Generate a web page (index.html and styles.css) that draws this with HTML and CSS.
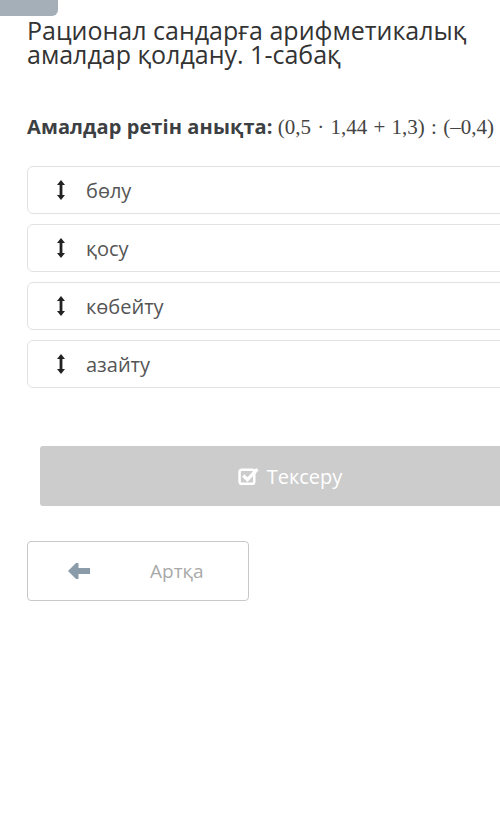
FILE: index.html
```html
<!DOCTYPE html>
<html lang="kk">
<head>
  <meta charset="UTF-8">
  <title>Рационал сандарға арифметикалық амалдар қолдану</title>
  <link rel="stylesheet" href="styles.css">
</head>
<body>

<div class="tab"></div>

<main class="lesson">
  <h1 class="title">Рационал сандарға арифметикалық амалдар қолдану. 1-сабақ</h1>

  <p class="question"><b>Амалдар ретін анықта:</b> <span class="math">(0,5 · 1,44 + 1,3) : (–0,4)</span></p>

  <ul class="order-list">
    <li class="order-item">
      <svg class="drag" viewBox="0 0 8 20" width="8" height="20"><path d="M4 0 L8 5 H5.4 V15 H8 L4 20 L0 15 H2.6 V5 H0 Z" fill="#222"/></svg>
      <span>бөлу</span>
    </li>
    <li class="order-item">
      <svg class="drag" viewBox="0 0 8 20" width="8" height="20"><path d="M4 0 L8 5 H5.4 V15 H8 L4 20 L0 15 H2.6 V5 H0 Z" fill="#222"/></svg>
      <span>қосу</span>
    </li>
    <li class="order-item">
      <svg class="drag" viewBox="0 0 8 20" width="8" height="20"><path d="M4 0 L8 5 H5.4 V15 H8 L4 20 L0 15 H2.6 V5 H0 Z" fill="#222"/></svg>
      <span>көбейту</span>
    </li>
    <li class="order-item">
      <svg class="drag" viewBox="0 0 8 20" width="8" height="20"><path d="M4 0 L8 5 H5.4 V15 H8 L4 20 L0 15 H2.6 V5 H0 Z" fill="#222"/></svg>
      <span>азайту</span>
    </li>
  </ul>

  <button class="check-btn" disabled>
    <svg viewBox="0 0 20 18" width="21" height="19"><rect x="1.5" y="2.5" width="14" height="13.5" rx="2" fill="none" stroke="#fff" stroke-width="2.4"/><path d="M5 8 L9 12 L18.5 2" fill="none" stroke="#fff" stroke-width="3.2"/></svg>
    Тексеру
  </button>

  <button class="back-btn">
    <svg viewBox="0 0 22 16" width="22" height="16"><path d="M0 8 L8 0 H10.5 V5 H22 V11 H10.5 V16 H8 Z" fill="#8a9baa"/></svg>
    <span>Артқа</span>
  </button>
</main>

</body>
</html>
```

FILE: styles.css
```css
* { box-sizing: border-box; margin: 0; padding: 0; }
html, body { overflow: hidden; }
body { font-family: 'Open Sans', 'Noto Sans', sans-serif; background: #fff; color: #333; width: 500px; }

.tab { width: 58px; height: 16px; background: #a5afb8; border-radius: 0 0 6px 0; }

.lesson { width: 560px; padding-left: 27px; }

.title { font-size: 25px; font-weight: 400; line-height: 24px; margin-top: 2px; width: 450px; color: #333; }

.question { margin-top: 47px; font-size: 20px; line-height: 28px; color: #444; white-space: nowrap; }
.question b { color: #3c4043; letter-spacing: 0.1px; }
.math { font-family: 'Liberation Serif', 'DejaVu Serif', serif; font-size: 21px; word-spacing: 1px; color: #444; }

.order-list { list-style: none; margin-top: 25px; display: flex; flex-direction: column; gap: 10px; }
.order-item {
  display: flex; align-items: center; height: 48px;
  border: 1px solid #e2e2e2; border-radius: 6px; padding-left: 29px;
  font-size: 20px; color: #555;
}
.order-item span { margin-left: 21px; }

.check-btn {
  display: flex; align-items: center; justify-content: center; gap: 8px;
  margin: 58px 0 0 13px; width: 500px; height: 60px;
  background: #cccccc; color: #fff; border: none; border-radius: 3px;
  font-family: inherit; font-size: 20px;
}

.back-btn {
  display: flex; align-items: center; margin-top: 35px;
  width: 222px; height: 60px; background: #fff;
  border: 1px solid #c8c8c8; border-radius: 4px; padding-left: 40px;
  font-family: inherit; font-size: 19px; color: #a9a9a9;
}
.back-btn span { margin-left: 60px; }
```
